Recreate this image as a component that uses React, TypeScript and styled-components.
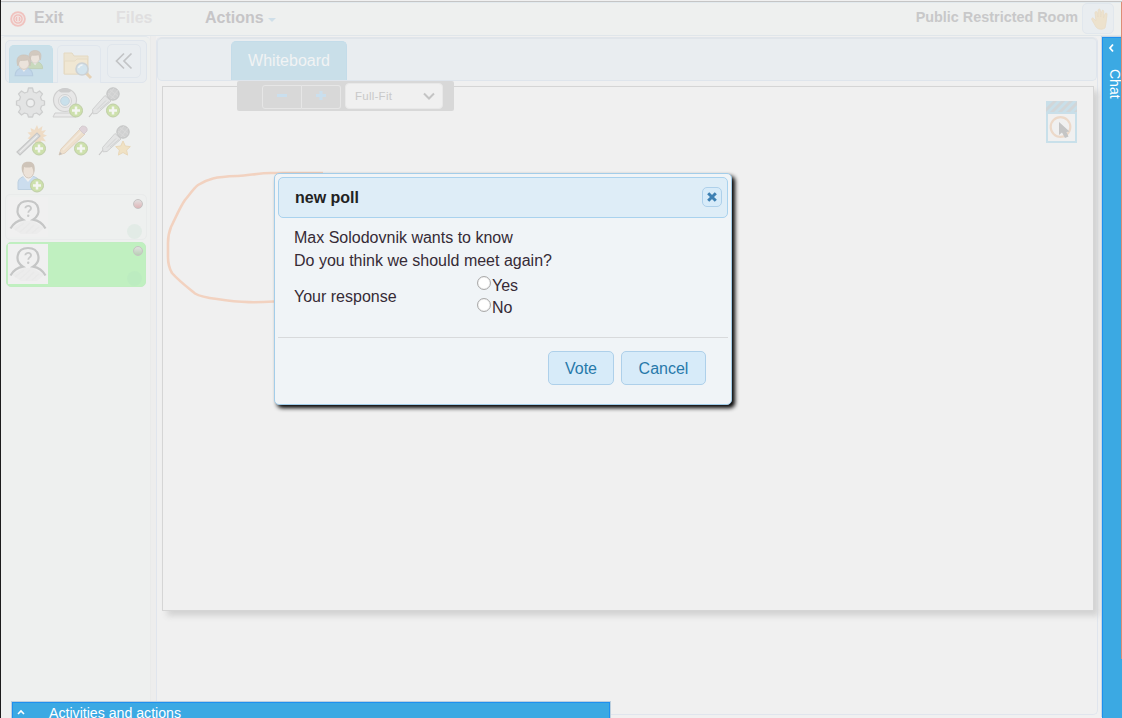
import React from 'react';
import styled, { createGlobalStyle } from 'styled-components';

const Global = createGlobalStyle`
  * { box-sizing: border-box; }
  body { margin: 0; background: #f0f0f0; font-family: "Liberation Sans", Arial, sans-serif; overflow: hidden; }
`;

const Page = styled.div`
  position: relative;
  width: 1122px;
  height: 718px;
  overflow: hidden;
  display: flex;
  flex-direction: column;
  background: #f0f0f0;
  border-left: 1px solid #1c1c1c;
`;
const MenuBar = styled.header`
  flex: none;
  display: flex;
  align-items: flex-start;
  margin-top: 1px;
  border-top: 1px solid #c5c5c5;
  border-bottom: 1px solid #e0e6ea;
  background: #eef0ef;
  box-shadow: inset 0 1px #e2eaee;
  height: 35px;
  padding-left: 8px;
`;
const MenuItem = styled.div<{ $w: number; $faint?: boolean }>`
  width: ${p => p.$w}px;
  height: 32px;
  display: flex;
  align-items: center;
  font-size: 16px;
  font-weight: bold;
  color: ${p => (p.$faint ? '#e0dfe0' : '#c6c5c7')};
  svg { flex: none; margin-top: 1px; }
`;
const Caret = styled.span`
  margin: 3px 0 0 4px;
  border: 4px solid transparent;
  border-top-color: #cfdfe9;
  border-bottom: 0;
`;
const RoomName = styled.div`
  margin-left: auto;
  height: 31px;
  line-height: 31px;
  font-size: 14.4px;
  font-weight: bold;
  color: #c8c8c9;
  white-space: nowrap;
`;
const HandButton = styled.div`
  width: 32px;
  height: 31px;
  margin: 1px 8px 0 4px;
  border: 1px solid #e1e7ed;
  border-radius: 5px;
  background: #e9edf0;
  display: flex;
  align-items: center;
  justify-content: center;
  padding-left: 3px;
`;
const Body = styled.div`
  flex: 1;
  min-height: 0;
  display: flex;
`;
const Sidebar = styled.aside`
  width: 149px;
  background: #eef0ef;
  border-radius: 5px 5px 0 0;
  border-top: 1px solid #e3e8ec;
  padding: 3px 4px 0;
`;
const Splitter = styled.div`
  width: 6px;
  background: #ededed;
  border-left: 1px solid #e9eaea;
`;
const SideTabs = styled.div`
  height: 43px;
  width: 142px;
  border: 1px solid #dfe5ec;
  border-radius: 5px;
  background: #e9edf0;
  display: flex;
  padding: 4px 0 0 3px;
`;
const SideTab = styled.div<{ $active?: boolean }>`
  width: 44px;
  height: 38px;
  margin-right: 4px;
  border: 1px solid ${p => (p.$active ? '#c5dfe9' : '#e0e6ed')};
  border-bottom: 0;
  border-radius: 5px 5px 0 0;
  background: ${p => (p.$active ? '#c9dfe9' : '#e9edf0')};
  display: flex;
  align-items: center;
  justify-content: center;
`;
const Collapse = styled.div`
  width: 34px;
  height: 34px;
  margin: -1px 0 0 2px;
  border: 1px solid #e0e6ec;
  border-radius: 5px;
  display: flex;
  align-items: center;
  justify-content: center;
`;
const ToolRow = styled.div<{ $gap: number; $h: number }>`
  display: flex;
  gap: ${p => p.$gap}px;
  height: ${p => p.$h}px;
  padding: 3px 0 0 9px;
  svg { flex: none; }
`;
const UserRow = styled.div<{ $self?: boolean }>`
  width: ${p => (p.$self ? 140 : 142)}px;
  height: ${p => (p.$self ? 45 : 46)}px;
  margin: ${p => (p.$self ? '2px 0 0 1px' : '0')};
  border: 1px solid ${p => (p.$self ? '#c0eec0' : '#e9ebeb')};
  border-radius: 5px;
  background: ${p => (p.$self ? '#c0f0c0' : '#eef0ef')};
  display: flex;
  justify-content: space-between;
  padding: ${p => (p.$self ? '1px 1px 0 1px' : '2px 2px 0')};
`;
const Avatar = styled.div`
  width: 40px;
  height: 40px;
  background: #f0f0f0;
`;
const Marks = styled.div`
  display: flex;
  flex-direction: column;
  align-items: flex-end;
  justify-content: space-between;
  padding-top: 2px;
`;
const Dot = styled.i<{ $c: string }>`
  width: 10px;
  height: 10px;
  margin-right: 1px;
  border-radius: 50%;
  border: 1px solid #c6c3c3;
  background: linear-gradient(#e2e0e0, ${p => p.$c});
`;
const Badge = styled.i<{ $c: string }>`
  width: 15px;
  height: 15px;
  margin-right: 2px;
  border-radius: 50%;
  background: ${p => p.$c};
`;
const Board = styled.main`
  width: 942px;
  height: 678px;
  margin-top: 1px;
  border: 1px solid #e0e5ed;
  border-top: 0;
  border-radius: 5px;
`;
const BoardTabs = styled.div`
  height: 44px;
  border: 1px solid #dfe5ec;
  border-top: 2px solid #e0e5ea;
  border-radius: 5px;
  background: #e9edf0;
  padding: 2px 0 0 73px;
`;
const BoardTab = styled.div`
  width: 116px;
  height: 39px;
  border: 1px solid #c4dce9;
  border-bottom: 0;
  border-radius: 5px 5px 0 0;
  background: #c9dfe9;
  color: #f1f3f4;
  font-size: 16px;
  line-height: 37px;
  text-align: center;
`;
const Canvas = styled.div`
  position: relative;
  width: 932px;
  height: 525px;
  margin: 5px 0 0 5px;
  border: 1px solid #d5d5d5;
  box-shadow: 5px 5px 6px #d3d3d3;
  background: #f0f0f0;
`;
const Stroke = styled.svg`
  display: block;
`;
const Zoom = styled.div`
  position: absolute;
  left: 74px;
  top: -6px;
  width: 217px;
  height: 30px;
  border-radius: 2px;
  background: #d8d8d8;
  display: flex;
  padding: 4px 0 0 25px;
`;
const ZoomBtn = styled.div<{ $last?: boolean }>`
  width: ${p => (p.$last ? 39 : 40)}px;
  height: 24px;
  border: 1px solid #e6e6e6;
  border-left-width: ${p => (p.$last ? 0 : 1)}px;
  border-radius: ${p => (p.$last ? '0 3px 3px 0' : '3px 0 0 3px')};
  display: flex;
  align-items: center;
  justify-content: center;
  padding-bottom: 3px;
  svg { flex: none; }
`;
const Fit = styled.div`
  width: 98px;
  height: 26px;
  margin: -2px 0 0 4px;
  border: 1px solid #e8e8e8;
  border-radius: 4px;
  background: #f0f0f0;
  display: flex;
  align-items: center;
  justify-content: space-between;
  padding: 0 7px 0 9px;
  font-size: 11.5px;
  letter-spacing: 0.25px;
  color: #c9c9c9;
`;
const ToolBox = styled.div`
  position: absolute;
  left: 883px;
  top: 14px;
  width: 31px;
  height: 42px;
  border: 2px solid #c9e0ea;
  border-top: 0;
  svg { display: block; margin-left: -2px; }
`;
const ChatBar = styled.div`
  position: absolute;
  left: 1101px;
  top: 37px;
  width: 20px;
  height: 681px;
  border: 1px solid #1e90ef;
  border-bottom: 0;
  border-right: 0;
  background: #3ba9e3;
  box-shadow: -1px -1px #c8d7e4;
  color: #fff;
  display: flex;
  flex-direction: column;
  align-items: center;
  svg { margin: 5px 4px 0 0; }
`;
const ChatLabel = styled.span`
  writing-mode: vertical-rl;
  font-size: 14px;
  line-height: 16px;
  margin: 16px 0 0 4px;
`;
const Edge = styled.div`
  position: absolute;
  right: 0;
  top: 2px;
  width: 1px;
  height: 657px;
  background: #dd8d75;
`;
const Activities = styled.div`
  position: absolute;
  left: 11px;
  top: 702px;
  width: 598px;
  height: 30px;
  border: 1px solid #1e90ef;
  box-shadow: 0 0 0 1px #bccfde;
  background: #3ba9e3;
  color: #fff;
  display: flex;
  align-items: flex-start;
  padding-left: 4px;
  font-size: 14.15px;
  line-height: 20px;
  svg { margin: 6px 24px 0 0; }
`;
const Dialog = styled.section`
  position: absolute;
  left: 273px;
  top: 173px;
  width: 458px;
  height: 232px;
  border: 1px solid #a3cde9;
  border-radius: 5px;
  background: #f0f4f7;
  box-shadow: 3px 3px 4px #000;
  padding: 3px;
  color: #362b36;
  font-size: 16px;
`;
const TitleBar = styled.div`
  height: 41px;
  width: 450px;
  border: 1px solid #a9d2ee;
  border-radius: 5px;
  background: #deedf7;
  color: #222;
  font-weight: bold;
  display: flex;
  align-items: center;
  justify-content: space-between;
  padding: 0 5px 0 16px;
`;
const Close = styled.div`
  width: 20px;
  height: 20px;
  margin-top: -1px;
  border: 1px solid #aed0ea;
  border-radius: 5px;
  background: #d7ebf9;
  display: flex;
  align-items: center;
  justify-content: center;
`;
const Content = styled.div`
  padding: 8px 16px 0;
  height: 120px;
  line-height: 23px;
  border-bottom: 1px solid #d8dadc;
  width: 450px;
`;
const Answer = styled.div`
  display: flex;
  align-items: flex-start;
`;
const Question = styled.span`
  width: 183px;
  line-height: 49px;
`;
const Options = styled.div`
  padding-top: 2px;
`;
const Option = styled.label`
  display: flex;
  height: 22px;
  line-height: 23px;
  gap: 1px;
`;
const Radio = styled.span`
  width: 14px;
  height: 14px;
  margin-top: 2px;
  border-radius: 50%;
  border: 1px solid #aaa;
  background: #fff;
  box-shadow: inset 0 0 1px #bbb;
`;
const Buttons = styled.div`
  display: flex;
  justify-content: flex-end;
  gap: 7px;
  padding: 13px 22px 0 0;
`;
const Button = styled.div<{ $w: number }>`
  width: ${p => p.$w}px;
  height: 34px;
  border: 1px solid #aed0ea;
  border-radius: 5px;
  background: #d7ebf9;
  color: #2779aa;
  line-height: 33px;
  text-align: center;
`;

const Plus = () => (
  <g>
    <circle cx="25" cy="24.5" r="6.5" fill="#cde0ac" stroke="#bfcea6" />
    <path d="M25 20.5v8M21 24.5h8" stroke="#f4f5f2" strokeWidth="2.5" />
  </g>
);
const Mic = () => (
  <g>
    <path d="M1 31l4-5" stroke="#c7c7c7" strokeWidth="1.2" />
    <path d="M4.500 23.500L17 9.500l6 5.500L9 27.500l-4 .3z" fill="#e3e4e4" stroke="#cfd0d0" />
    <path d="M9 23.500l9-9M12 23l9-7.500" stroke="#d2d3d3" strokeWidth="1" />
    <circle cx="25" cy="8" r="6.2" fill="#d0d1d1" stroke="#c2c3c3" />
    <path d="M20 7l7 6M22 4l8 6M26 2l-6 8M30 4l-7 9" stroke="#dadada" strokeWidth=".8" />
  </g>
);
const Star = () => (
  <path d="M25 17l2.3 5 5 .6-3.7 3.5 1 5-4.6-2.6-4.6 2.6 1-5-3.7-3.5 5-.6z" fill="#f0e2c4" stroke="#e9d8b9" />
);
const Head = ({ x, y, s = 1, body, line }: { x: number; y: number; s?: number; body: string; line: string }) => (
  <g transform={`translate(${x} ${y}) scale(${s})`}>
    <path d="M1 18c0-5 3-6 5-7l3 2 3-2c3 1 5 3 5 7z" fill={body} stroke={line} />
    <path d="M6 10.500l3 4 3-4z" fill="#eceeee" />
    <ellipse cx="9" cy="6" rx="5" ry="6.200" fill="#ebe3db" stroke="#d9d0c8" />
    <path d="M3.500 9C1 1 5-1 9-1s8 2 5.500 10L13 3.500C9 4.500 6 3.500 5 4.500z" fill="#d2c9bf" stroke="#c9c0b6" strokeWidth=".6" />
  </g>
);
const Tool = ({ children }: { children: React.ReactNode }) => (
  <svg width="34" height="34" viewBox="0 0 34 34" fill="none">{children}</svg>
);
const Person = () => (
  <svg width="40" height="40" viewBox="0 0 40 40" fill="none">
    <path d="M4 31l11-7h10l11 7-7 6H13z" fill="#ececec" />
    <path d="M7 33l9-7M12 35l10-9M18 36l8-8M24 36l7-6" stroke="#e9e9e9" strokeWidth="1.400" />
    <path d="M2.500 31.500C5 27 9 23.500 15 22.600 6 17 8.500 4 20 4S34 17 25 22.600c6 .9 10 4.400 12.500 8.900" stroke="#c5c6c6" strokeWidth="2.200" />
    <path d="M17.300 11.300c.2-3.500 6.200-2.800 5.700.2-.3 2-2.700 2-2.700 4.300" stroke="#c8c9c9" strokeWidth="1.800" />
    <circle cx="20.200" cy="18.700" r="1.200" fill="#c8c9c9" />
  </svg>
);

export default function App() {
  return (
    <Page>
      <Global />
      <MenuBar>
        <MenuItem $w={107}>
          <svg width="25" height="18" viewBox="0 0 25 18" fill="none">
            <circle cx="9" cy="9" r="7.800" fill="#f0c3bf" />
            <circle cx="9" cy="9" r="5.400" fill="#f0c0bc" stroke="#f1e6e4" strokeWidth="1.200" />
            <circle cx="9" cy="9" r="3" stroke="#f1e2e0" />
            <path d="M9 6v6" stroke="#f1e2e0" strokeWidth="1.700" />
          </svg>
          Exit
        </MenuItem>
        <MenuItem $w={89} $faint>Files</MenuItem>
        <MenuItem $w={90}>Actions<Caret /></MenuItem>
        <RoomName>Public Restricted Room</RoomName>
        <HandButton>
          <svg width="18" height="22" viewBox="0 0 18 22">
            <path d="M5 19L1 12c-1-2 1-3 2-1l2 2-1-8c0-2 2-2 2.300 0L7 9l.1-6.500c0-2 2.200-2 2.300 0l.3 6.500 1-5.500c.4-2 2.300-1.500 2 .4L12.500 10l1.500-4c.6-1.800 2.300-1 2 .7L15 15l-1 5c-3 2-7 1.500-9-1z" fill="#ede2cd" stroke="#e8dcc7" strokeWidth=".8" />
          </svg>
        </HandButton>
      </MenuBar>
      <Body>
        <Sidebar>
          <SideTabs>
            <SideTab $active>
              <svg width="34" height="32" viewBox="0 0 34 32">
                <Head x={12.5} y={2.5} s={0.95} body="#c8d9bd" line="#bfd0b6" />
                <Head x={0} y={7} s={1.1} body="#c1d6ea" line="#b6ccdf" />
              </svg>
            </SideTab>
            <SideTab>
              <svg width="32" height="30" viewBox="3 0 32 30" fill="none">
                <path d="M4 24V3h8l2 3h14v18z" fill="#ece4d2" stroke="#e4d9c2" />
                <path d="M4.500 11h10.500l2-2h10.500v15h-23z" fill="#f0e7d3" stroke="#e4d9c2" strokeWidth=".8" />
                <path d="M26 23l5 5" stroke="#e5d2b6" strokeWidth="3" />
                <circle cx="22" cy="19" r="6" fill="#d3e4ed" stroke="#ccd2d6" strokeWidth="1.600" />
                <path d="M18.500 18q1-3 4-3" stroke="#f0f3f5" strokeWidth="1.500" />
              </svg>
            </SideTab>
            <Collapse>
              <svg width="18" height="18" viewBox="0 0 18 18" fill="none" stroke="#c2c4c6" strokeWidth="1.700">
                <path d="M9 1.500L1.500 9 9 16.500M16.500 1.500L9 9l7.500 7.500" />
              </svg>
            </Collapse>
          </SideTabs>
          <ToolRow $gap={3} $h={38}>
            <Tool>
              <path d="M14 3h4l1 4 3 1 3-2 3 3-2 3 1 3 3 1v4l-3 1-1 3 2 3-3 3-3-2-3 1-1 3h-4l-1-3-3-1-3 2-3-3 2-3-1-3-3-1v-4l3-1 1-3-2-3 3-3 3 2 3-1z" transform="translate(.5 -1)" fill="#e3e4e4" stroke="#cdcece" strokeWidth="1.300" strokeLinejoin="round" />
              <circle cx="16.500" cy="17" r="4" fill="#eeefef" stroke="#cbcccc" strokeWidth="1.500" />
            </Tool>
            <Tool>
              <path d="M4 27h19l2 4H2z" fill="#e9e9e9" stroke="#cfcfcf" />
              <circle cx="14" cy="14" r="11.500" fill="#e7e7e7" stroke="#cfcfcf" strokeWidth="1.200" />
              <path d="M7 4.500q7-5 14 0l-3 2h-8z" fill="#cdcdcd" />
              <circle cx="14" cy="15" r="6.500" fill="#ebebeb" stroke="#d3d3d3" />
              <circle cx="14" cy="15" r="4.400" fill="#c9e0eb" stroke="#c6d5de" />
              <Plus />
            </Tool>
            <Tool><Mic /><Plus /></Tool>
          </ToolRow>
          <ToolRow $gap={8} $h={37}>
            <Tool>
              <path d="M23 1l1.500 4 4-3-1 5 4.500-1-3 4 4 1.500-4 2 3 4-5-1 1 4-4-3-2 4-1.500-4-4 2 1-4-4-1 3-3-3-3 4-.5-1-4 4 2z" fill="#eedcc6" />
              <path d="M3 28L23 9l3 3L6 31z" fill="#dedfdf" stroke="#c6c7c7" strokeWidth="1.200" />
              <path d="M6 28L23 12" stroke="#f0f0f0" />
              <Plus />
            </Tool>
            <Tool>
              <path d="M3 31l2-6L24 5l5 5L9 29z" fill="#eee0cd" stroke="#e2d2bf" />
              <path d="M7 26L25 8" stroke="#f1e9de" strokeWidth="1.500" />
              <path d="M23 5l3-3q6 0 5 5l-3 3z" fill="#dfd3d9" stroke="#d5ccd0" />
              <path d="M3 31l1-3 2 2z" fill="#bfbcb8" />
              <Plus />
            </Tool>
            <Tool><Mic /><Star /></Tool>
          </ToolRow>
          <ToolRow $gap={4} $h={36}>
            <Tool>
              <path d="M4 28.500V21q1-5 8-6h5q8 1 9 7v6.500z" fill="#cbddee" stroke="#bdd0e0" />
              <path d="M9 15l5 6 5-6z" fill="#f0f0ef" />
              <ellipse cx="14.500" cy="9.500" rx="5.500" ry="7.500" fill="#ece2d8" stroke="#d4c8bd" />
              <path d="M8.500 12C5.500 2 11 .5 15 .8c5-.3 7 5 5 11L18 6q-5 1-8 0z" fill="#cec4b9" />
              <g transform="translate(-2 0)"><Plus /></g>
            </Tool>
          </ToolRow>
          <UserRow>
            <Avatar><Person /></Avatar>
            <Marks><Dot $c="#dfb6b8" /><Badge $c="#e2ebe6" /></Marks>
          </UserRow>
          <UserRow $self>
            <Avatar><Person /></Avatar>
            <Marks><Dot $c="#b8d0b5" /><Badge $c="#bcecc0" /></Marks>
          </UserRow>
        </Sidebar>
        <Splitter />
        <Board>
          <BoardTabs><BoardTab>Whiteboard</BoardTab></BoardTabs>
          <Canvas>
            <Stroke width="260" height="240" viewBox="0 0 260 240" fill="none">
              <path d="M160 86H108C96 86 86 88.500 75 89 66 89.300 58 89.500 50 91.500 44 93 39 95.500 35 98 31 101 27 107 22 113 17 120 13 130 8 140 5.500 146 5 151 5 156V170C5 176 6 181 9 186 15 193 24 200 32 206.500 36 209 45 211 54 212 80 216 94 215.500 111 214.500" stroke="#f2d2c0" strokeWidth="2.600" />
            </Stroke>
            <Zoom>
              <ZoomBtn>
                <svg width="10" height="9"><path d="M0 4.500h10" stroke="#cadfee" strokeWidth="3" /></svg>
              </ZoomBtn>
              <ZoomBtn $last>
                <svg width="10" height="9"><path d="M0 4.500h10M5 0v9" stroke="#cadfee" strokeWidth="3" /></svg>
              </ZoomBtn>
              <Fit>
                Full-Fit
                <svg width="12" height="8" fill="none"><path d="M1 1.500l5 5 5-5" stroke="#c4c4c4" strokeWidth="2" /></svg>
              </Fit>
            </Zoom>
            <ToolBox>
              <svg width="31" height="40" viewBox="0 0 31 40" fill="none">
                <path d="M0 0h31v13H0z" fill="#c9dfe9" />
                <path d="M0 7l7-7h4L0 11zM4 11L15 0h4L8 11zM12 11L23 0h4L16 11zM20 11L31 0v4l-7 7zM28 11l3-3v3z" fill="#d2d6d8" />
                <circle cx="14.500" cy="26" r="9.800" stroke="#ecd9c9" strokeWidth="2.200" />
                <path d="M13 21v13l3-2.500 3 5.500 3.500-1.500-2-4.500 3-.5z" fill="#c5c5c5" />
              </svg>
            </ToolBox>
          </Canvas>
        </Board>
      </Body>
      <ChatBar>
        <svg width="6" height="10" fill="none"><path d="M5 1.500L2 5l3 3.500" stroke="#fff" strokeWidth="1.800" /></svg>
        <ChatLabel>Chat</ChatLabel>
      </ChatBar>
      <Edge />
      <Activities>
        <svg width="8" height="8" fill="none"><path d="M1 5l3-3 3 3" stroke="#fff" strokeWidth="1.600" /></svg>
        Activities and actions
      </Activities>
      <Dialog>
        <TitleBar>
          new poll
          <Close>
            <svg width="10" height="10"><path d="M1.200 1.200l7.600 7.600M8.800 1.200L1.200 8.800" stroke="#3d80b3" strokeWidth="3" /></svg>
          </Close>
        </TitleBar>
        <Content>
          <div>Max Solodovnik wants to know</div>
          <div>Do you think we should meet again?</div>
          <Answer>
            <Question>Your response</Question>
            <Options>
              <Option><Radio />Yes</Option>
              <Option><Radio />No</Option>
            </Options>
          </Answer>
        </Content>
        <Buttons>
          <Button $w={66}>Vote</Button>
          <Button $w={85}>Cancel</Button>
        </Buttons>
      </Dialog>
    </Page>
  );
}
